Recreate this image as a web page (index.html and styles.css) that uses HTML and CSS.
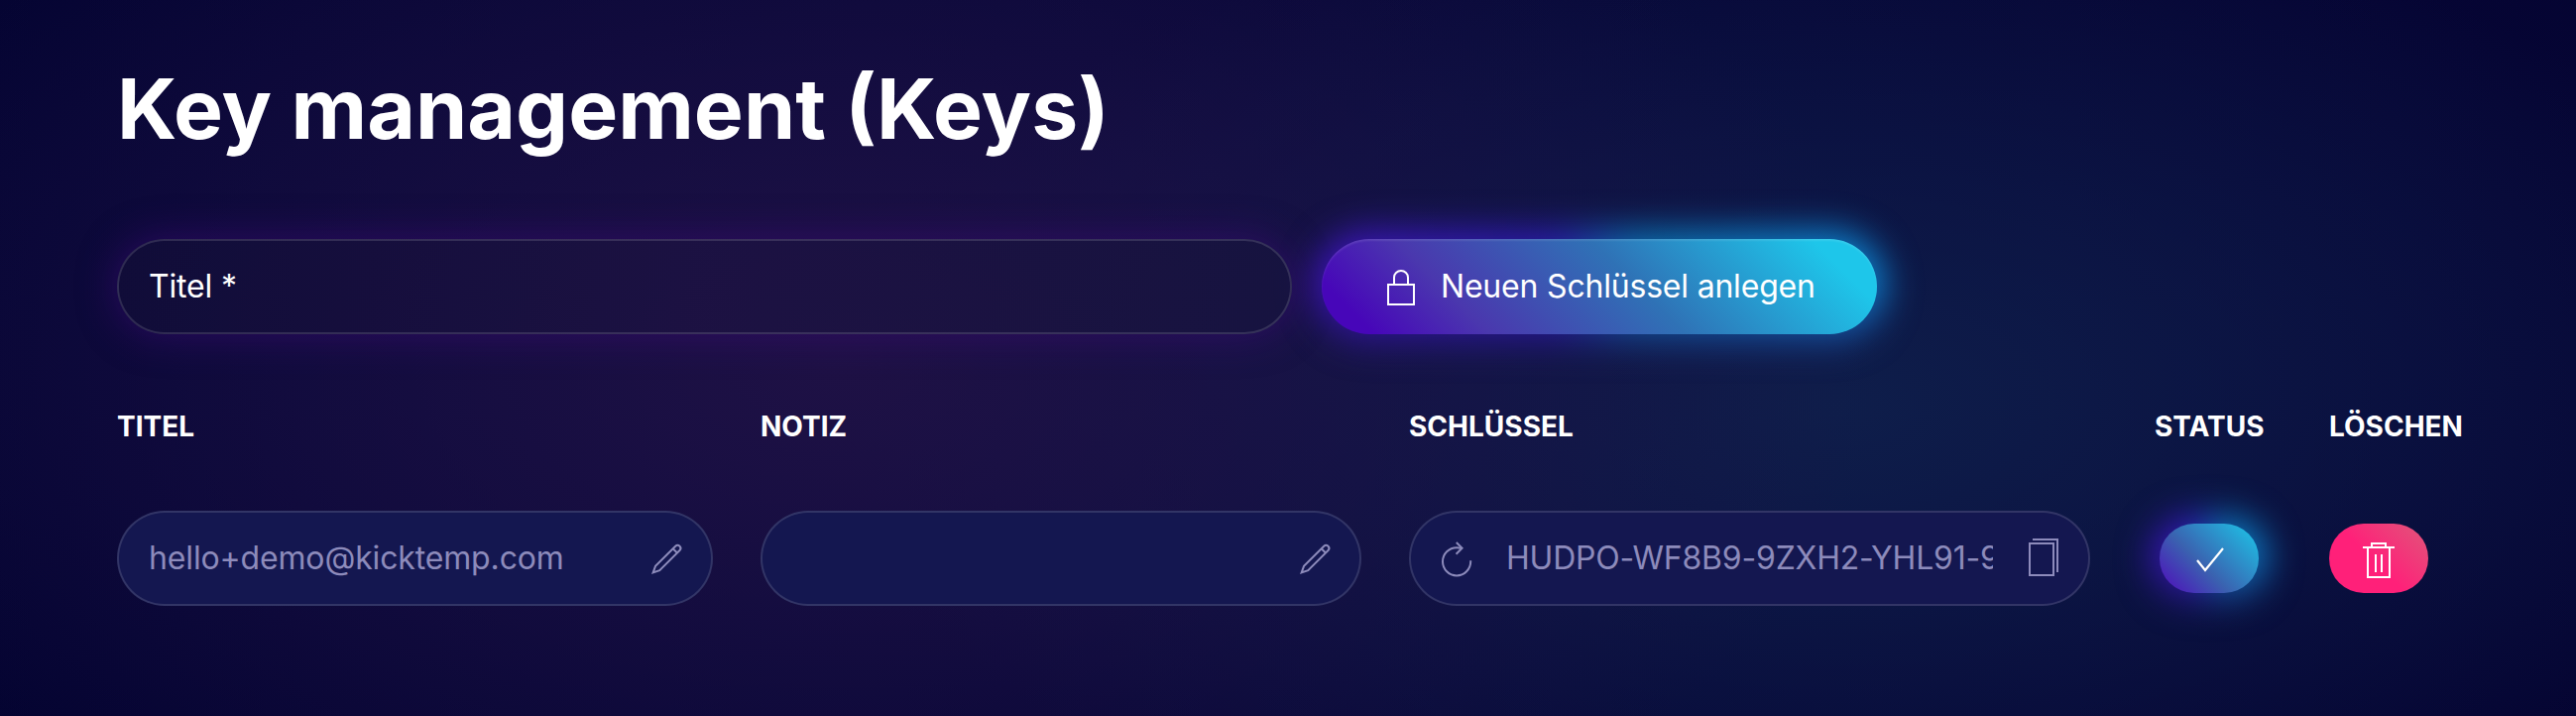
FILE: index.html
```html
<!DOCTYPE html>
<html lang="de">
<head>
<meta charset="utf-8">
<title>Key management (Keys)</title>
<link rel="stylesheet" href="styles.css">
</head>
<body>
<main class="page">
  <h1 class="title">Key management (Keys)</h1>
  <form class="create">
    <div class="field field-new">Titel *</div>
    <button type="button" class="btn btn-create">
      <svg class="icon" viewBox="0 0 20 20"><rect x="3.5" y="8.5" width="13" height="10"/><path d="M6.5,8 L6.5,4.88 C6.5,3.01 8.07,1.5 10,1.5 C11.93,1.5 13.5,3.01 13.5,4.88 L13.5,8"/></svg>
      <span class="label">Neuen Schlüssel anlegen</span>
    </button>
  </form>
  <section class="keys">
    <div class="head">TITEL</div>
    <div class="head">NOTIZ</div>
    <div class="head">SCHLÜSSEL</div>
    <div class="head">STATUS</div>
    <div class="head">LÖSCHEN</div>
    <div class="field field-row">
      <span class="value">hello+demo@kicktemp.com</span>
      <svg class="icon" viewBox="0 0 20 20"><path d="M17.25,6.01 L7.12,16.1 L3.82,17.2 L5.02,13.9 L15.12,3.88 C15.71,3.29 16.66,3.29 17.25,3.88 C17.83,4.47 17.83,5.42 17.25,6.01 Z"/><path d="M15.98,7.268 L13.851,5.148"/></svg>
    </div>
    <div class="field field-row">
      <span class="value"></span>
      <svg class="icon" viewBox="0 0 20 20"><path d="M17.25,6.01 L7.12,16.1 L3.82,17.2 L5.02,13.9 L15.12,3.88 C15.71,3.29 16.66,3.29 17.25,3.88 C17.83,4.47 17.83,5.42 17.25,6.01 Z"/><path d="M15.98,7.268 L13.851,5.148"/></svg>
    </div>
    <div class="field field-row field-key">
      <svg class="icon" viewBox="0 0 20 20"><path d="M17.08,11.15 C17.09,11.31 17.1,11.47 17.1,11.64 C17.1,15.53 13.94,18.69 10.05,18.69 C6.16,18.68 3,15.53 3,11.63 C3,7.74 6.16,4.58 10.05,4.58 C10.9,4.58 11.71,4.73 12.46,5"/><polyline points="9.9 2 12.79 4.89 9.79 7.9"/></svg>
      <span class="value value-key">HUDPO-WF8B9-9ZXH2-YHL91-9</span>
      <svg class="icon" viewBox="0 0 20 20"><rect x="3.5" y="2.5" width="12" height="16"/><polyline points="5 0.5 17.5 0.5 17.5 17"/></svg>
    </div>
    <button type="button" class="btn btn-small btn-status" aria-label="Status">
      <svg class="icon icon-check" viewBox="0 0 20 20"><polyline points="4,10 8,15 17,4"/></svg>
    </button>
    <button type="button" class="btn btn-small btn-delete" aria-label="Löschen">
      <svg class="icon" viewBox="0 0 20 20"><polyline points="6.5 3 6.5 1.5 13.5 1.5 13.5 3"/><polyline points="4.5 4 4.5 18.5 15.5 18.5 15.5 4"/><path class="solid" d="M8 7h1v9H8zM11 7h1v9h-1zM2 3h16v1H2z"/></svg>
    </button>
  </section>
</main>
</body>
</html>
```
FILE: styles.css
```css
* { box-sizing: border-box; }

body {
  margin: 0;
  color: #fff;
  font-family: Inter, "Liberation Sans", sans-serif;
  font-size: 32px;
  letter-spacing: -.15px;
}

.page {
  isolation: isolate;
  min-height: 722px;
  padding: 59px 118px 0;
  overflow: hidden;
  background:
    radial-gradient(ellipse 1050px 600px at 850px 360px, rgba(33, 18, 70, .9), rgba(33, 18, 70, 0)),
    radial-gradient(ellipse 1000px 520px at 1850px 410px, rgba(15, 32, 76, .9), rgba(15, 32, 76, 0)),
    radial-gradient(ellipse 1900px 640px at 1300px 330px, #0b0c42, #040330);
}

.title {
  margin: 0;
  font-size: 84px;
  line-height: 102px;
  font-weight: 700;
  letter-spacing: 0;
  word-spacing: -.5px;
}

.create {
  display: flex;
  gap: 30px;
  margin-top: 80px;
}

.field {
  display: flex;
  align-items: center;
  height: 96px;
  padding: 0 30px 2px;
  border: 2px solid rgba(255, 255, 255, .13);
  border-radius: 48px;
}

.field-new {
  width: 1185px;
  background: linear-gradient(90deg, rgba(18, 14, 56, .7), rgba(29, 19, 66, .7) 50%, rgba(23, 20, 62, .7));
  box-shadow: 0 0 38px rgba(62, 10, 122, .6);
}

.icon {
  flex: none;
  width: 40px;
  height: 40px;
  fill: none;
  stroke: currentColor;
  stroke-width: 1;
}

.icon-check { stroke-width: 1.1; }
.solid { fill: currentColor; stroke: none; }

.btn {
  position: relative;
  display: flex;
  align-items: center;
  padding: 0;
  border: 0;
  color: #fff;
  font: inherit;
  letter-spacing: -.2px;
}

.btn-create {
  width: 560px;
  height: 96px;
  padding: 1px 0 0 60px;
  gap: 20px;
  border-radius: 48px;
  background: linear-gradient(45deg, #4706b9 8%, #4a38ae 26%, #2f72b6 56%, #1ec6ea 90%);
  box-shadow: inset 0 2px 2px rgba(255, 255, 255, .1);
}

.label { margin-top: -2px; }

.btn-create::before,
.btn-status::before {
  content: "";
  position: absolute;
  z-index: -1;
  inset: -9px;
  border-radius: 57px;
  background:
    linear-gradient(rgba(40, 10, 100, 0) 45%, rgba(30, 18, 96, .6)),
    linear-gradient(90deg, #3d14b4 0, #2b1cab 42%, #0b6fae 56%, #0e84d2 100%);
  filter: blur(17px);
}

.keys {
  display: grid;
  grid-template-columns: 649px 654px 752px 176px 140px;
  margin-top: 76px;
}

.head {
  height: 102px;
  font-size: 28px;
  font-weight: 700;
  line-height: 34px;
  letter-spacing: 0;
  white-space: nowrap;
}

.field-row {
  justify-content: space-between;
  margin-right: 48px;
  padding: 0 26px 0 30px;
  background: #141750;
  color: #8d8bbb;
}

.field-key {
  width: 687px;
  padding-left: 26px;
}

.value {
  overflow: hidden;
  padding-bottom: 2px;
  white-space: nowrap;
}

.value-key {
  width: 491px;
  letter-spacing: -.2px;
}

.btn-small {
  align-self: center;
  justify-content: center;
  width: 100px;
  height: 70px;
  padding-top: 3px;
  border-radius: 35px;
}

.btn-status {
  margin-left: 5px;
  background: linear-gradient(45deg, #4a22b8 12%, #3a62b0 42%, #22b4de 88%);
}

.btn-delete { background: linear-gradient(45deg, #ff2079 45%, #e2527a 95%); }
```
